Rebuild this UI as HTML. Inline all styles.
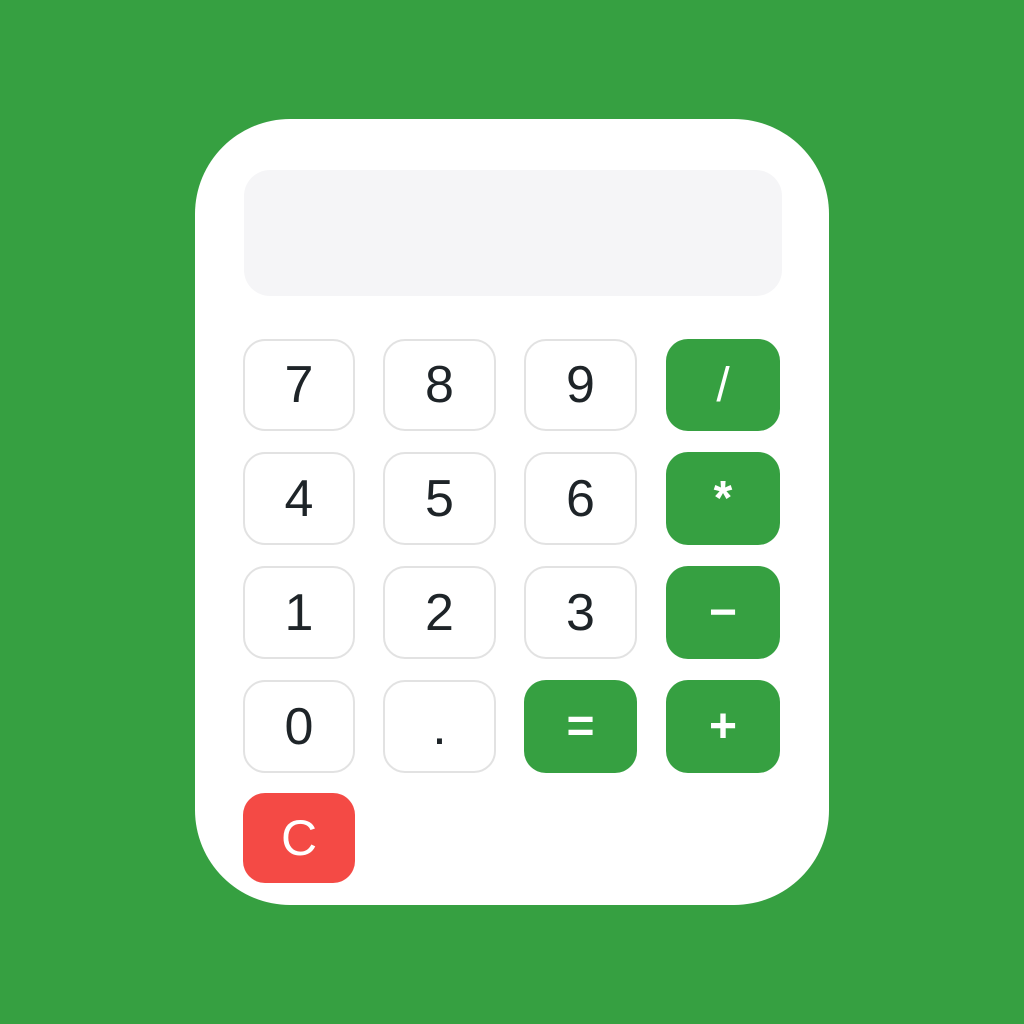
<!DOCTYPE html>
<html><head><style>
html,body{margin:0;padding:0;}
body{width:1024px;height:1024px;background:#36a041;position:relative;overflow:hidden;font-family:"Liberation Sans",sans-serif;}
.card{position:absolute;left:195px;top:119px;width:634px;height:786px;background:#fff;border-radius:95px;}
.disp{position:absolute;left:244px;top:170px;width:538px;height:126px;background:#f5f5f7;border-radius:26px;}
.b{position:absolute;box-sizing:border-box;border:2px solid #e2e2e2;background:#fff;border-radius:22px;display:flex;align-items:center;justify-content:center;font-size:52px;color:#1e2428;}
.g{background:#36a041;border:none;color:#fff;font-size:48px;font-weight:bold;}
.r{background:#f44a45;border:none;color:#fff;font-size:50px;}
</style></head><body>
<div class="card"></div>
<div class="disp"></div>
<div class="b" style="left:243px;top:339px;width:112px;height:92px">7</div>
<div class="b" style="left:383px;top:339px;width:113px;height:92px">8</div>
<div class="b" style="left:524px;top:339px;width:113px;height:92px">9</div>
<div class="b g" style="left:666px;top:339px;width:114px;height:92px;font-weight:normal">/</div>
<div class="b" style="left:243px;top:452px;width:112px;height:93px">4</div>
<div class="b" style="left:383px;top:452px;width:113px;height:93px">5</div>
<div class="b" style="left:524px;top:452px;width:113px;height:93px">6</div>
<div class="b g" style="left:666px;top:452px;width:114px;height:93px">*</div>
<div class="b" style="left:243px;top:566px;width:112px;height:93px">1</div>
<div class="b" style="left:383px;top:566px;width:113px;height:93px">2</div>
<div class="b" style="left:524px;top:566px;width:113px;height:93px">3</div>
<div class="b g" style="left:666px;top:566px;width:114px;height:93px">−</div>
<div class="b" style="left:243px;top:680px;width:112px;height:93px">0</div>
<div class="b" style="left:383px;top:680px;width:113px;height:93px">.</div>
<div class="b g" style="left:524px;top:680px;width:113px;height:93px">=</div>
<div class="b g" style="left:666px;top:680px;width:114px;height:93px">+</div>
<div class="b r" style="left:243px;top:793px;width:112px;height:90px">C</div>
</body></html>
